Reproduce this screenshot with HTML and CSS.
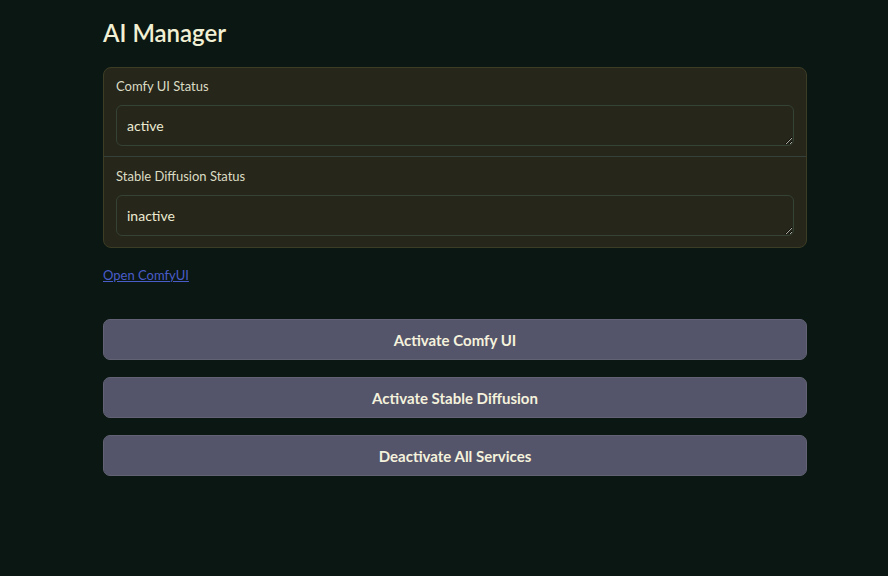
FILE: index.html
```html
<!DOCTYPE html>
<html>
<head>
<meta charset="utf-8">
<link rel="stylesheet" href="styles.css">
</head>
<body>
<main class="app">
  <h1 class="title">AI Manager</h1>
  <section class="panel">
    <div class="field">
      <label class="label">Comfy UI Status</label>
      <textarea class="box" rows="1">active</textarea>
    </div>
    <div class="field">
      <label class="label">Stable Diffusion Status</label>
      <textarea class="box" rows="1">inactive</textarea>
    </div>
  </section>
  <a class="link" href="#">Open ComfyUI</a>
  <div class="buttons">
    <button class="btn">Activate Comfy UI</button>
    <button class="btn">Activate Stable Diffusion</button>
    <button class="btn">Deactivate All Services</button>
  </div>
</main>
</body>
</html>
```
FILE: styles.css
```css
html, body {
  margin: 0;
  padding: 0;
  background: #0b1712;
  height: 100%;
}
body {
  font-family: Lato, "Open Sans", sans-serif;
  color: #ecebd2;
}
.app {
  width: 704px;
  margin: 0 0 0 103px;
  padding-top: 17px;
  display: flex;
  flex-direction: column;
}
.title {
  margin: 0;
  font-size: 24px;
  font-weight: 600;
  line-height: 32px;
  color: #f2f0d4;
}
.panel {
  margin-top: 18px;
  background: #26261a;
  border: 1px solid #3d3d26;
  border-radius: 8px;
  display: flex;
  flex-direction: column;
}
.field {
  padding: 10px 12px 10px 12px;
  display: flex;
  flex-direction: column;
}
.field + .field {
  border-top: 1px solid #34403a;
  padding-top: 11px;
  padding-bottom: 11px;
}
.label {
  font-size: 13px;
  line-height: 16px;
  color: #dcdcc4;
  margin-bottom: 11px;
}
.box {
  font-family: inherit;
  font-size: 14px;
  color: #ecebd2;
  background: #26261a;
  border: 1px solid #354236;
  border-radius: 6px;
  height: 41px;
  box-sizing: border-box;
  padding: 10px 10px;
  resize: vertical;
  outline: none;
  line-height: 19px;
}
.link {
  margin-top: 19px;
  align-self: flex-start;
  font-size: 13px;
  line-height: 16px;
  color: #4a5cc8;
  text-decoration: underline;
}
.buttons {
  margin-top: 36px;
  display: flex;
  flex-direction: column;
  gap: 17px;
}
.btn {
  height: 41px;
  background: #54546a;
  border: 1px solid #626274;
  border-radius: 7px;
  color: #f4f2dc;
  font-family: inherit;
  font-size: 15px;
  font-weight: 700;
}
```
